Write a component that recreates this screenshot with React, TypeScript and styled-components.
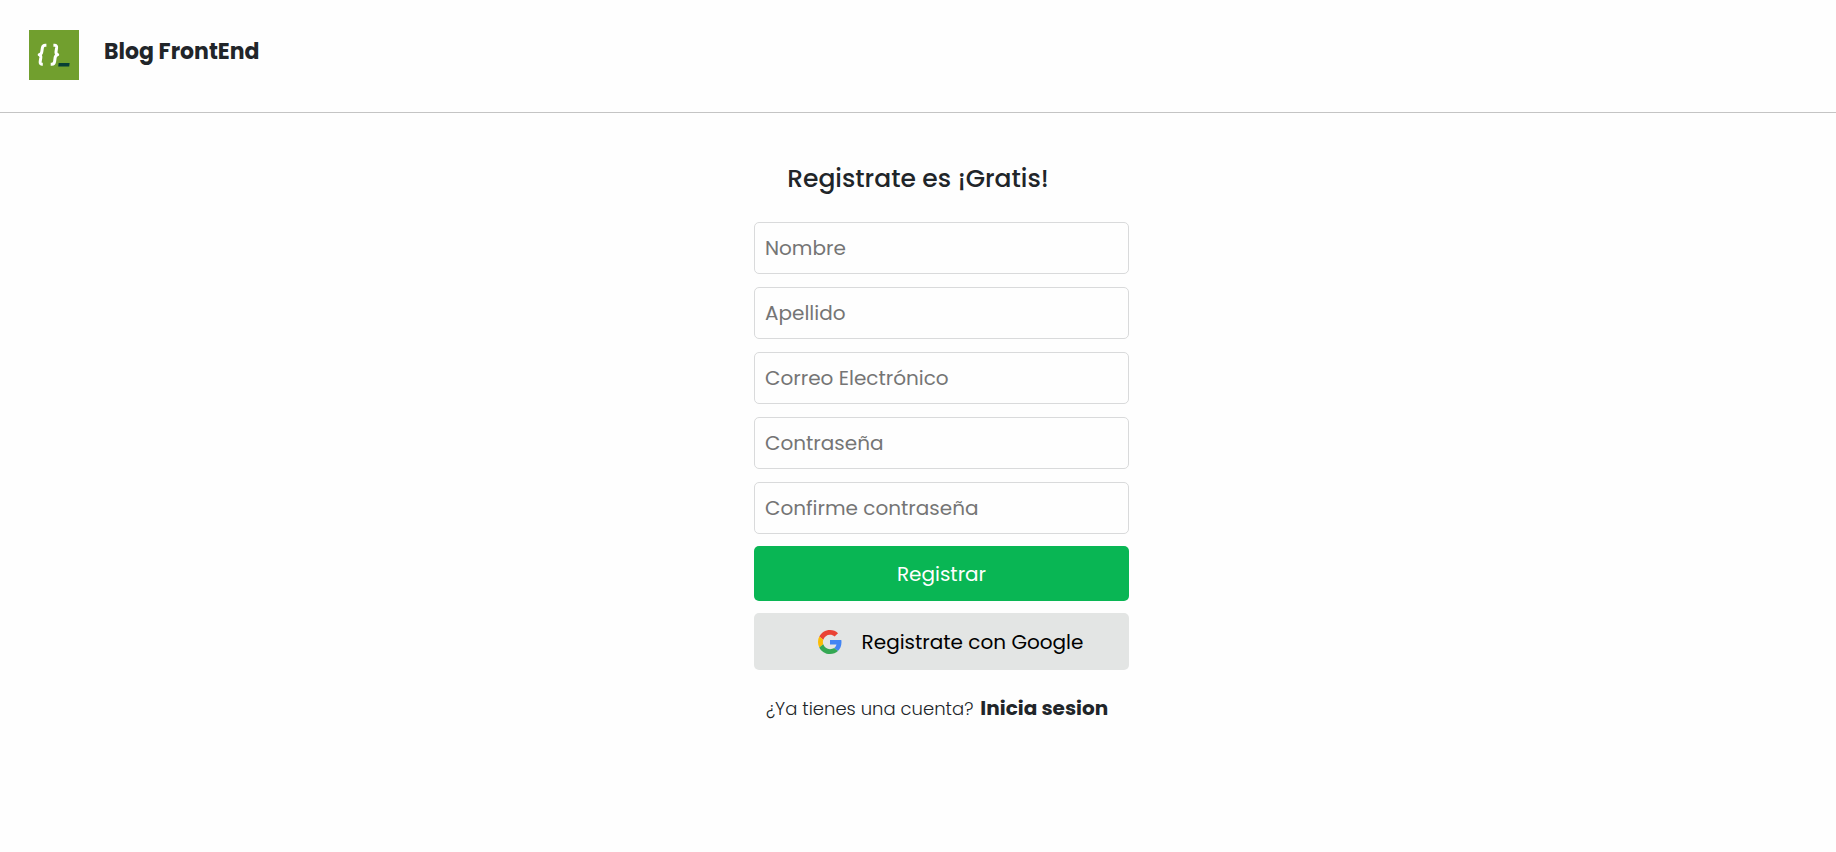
import React from "react";
import styled, { createGlobalStyle } from "styled-components";

const GlobalStyle = createGlobalStyle`
  *, *::before, *::after { box-sizing: border-box; }
  body {
    margin: 0;
    background: #fefefe;
    color: #212529;
    font-family: Poppins, Inter, "Open Sans", sans-serif;
  }
`;

const Header = styled.header`
  display: flex;
  align-items: flex-start;
  gap: 25px;
  padding: 30px 29px 32px;
  border-bottom: 1px solid #c4c4c4;
`;

const Logo = styled.svg`
  display: block;
  width: 50px;
  height: 50px;
`;

const Brand = styled.h1`
  margin: 0;
  padding-top: 4px;
  font-size: 22px;
  line-height: 36px;
  font-weight: 700;
`;

const Main = styled.main`
  width: 100%;
  max-width: 422px;
  margin: 0 auto;
  padding: 48px 0;
`;

const Title = styled.h2`
  margin: 0 0 25px;
  font-size: 25px;
  line-height: 36px;
  font-weight: 500;
  text-align: center;
`;

const Form = styled.form`
  display: flex;
  flex-direction: column;
  gap: 12px;
  margin-left: 47px;
`;

const Fields = styled.div`
  display: flex;
  flex-direction: column;
  gap: 13px;
`;

const Field = styled.input`
  width: 100%;
  height: 52px;
  padding: 0 10px;
  border: 1px solid #d9dadb;
  border-radius: 5px;
  background: #fefefe;
  color: #212529;
  font-family: inherit;
  font-size: 20px;
  &::placeholder { color: #757575; opacity: 1; }
`;

const Button = styled.button<{ $kind: "primary" | "google" }>`
  display: flex;
  align-items: center;
  justify-content: center;
  gap: 20px;
  height: ${(p) => (p.$kind === "google" ? 57 : 55)}px;
  padding: 0 0 0 ${(p) => (p.$kind === "google" ? 18 : 0)}px;
  border: 0;
  border-radius: 5px;
  background: ${(p) => (p.$kind === "google" ? "#e3e5e4" : "#09b654")};
  color: ${(p) => (p.$kind === "google" ? "#000" : "#fff")};
  font-family: inherit;
  font-size: 20px;
  cursor: pointer;
`;

const GoogleIcon = styled.svg`
  width: 24px;
  height: 24px;
`;

const SignIn = styled.p`
  display: flex;
  align-items: baseline;
  gap: 7px;
  margin: 10px 0 0;
  padding-left: 12px;
  font-size: 18px;
  line-height: 32px;
  font-weight: 300;
  white-space: nowrap;
`;

const SignInLink = styled.a`
  color: inherit;
  font-size: 20px;
  font-weight: 700;
  text-decoration: none;
`;

const fields = [
  { name: "nombre", label: "Nombre", type: "text" },
  { name: "apellido", label: "Apellido", type: "text" },
  { name: "correo", label: "Correo Electrónico", type: "email" },
  { name: "clave", label: "Contraseña", type: "password" },
  { name: "confirmacion", label: "Confirme contraseña", type: "password" },
];

export default function App() {
  return (
    <>
      <GlobalStyle />
      <Header>
        <Logo viewBox="0 0 50 50" aria-hidden="true">
          <path fill="#719f2e" d="M0 0h50v50H0z" />
          <g fill="none" stroke="#fff" strokeWidth="3" strokeLinejoin="round">
            <path d="M17.4 15.3h-1.2q-2.3 0-2.8 2.4l-.6 4q-.3 2.3-2.6 3 1.9.8 1.6 3.1l-.6 3.7q-.3 2.7 1.6 2.7h1" />
            <path d="M24.4 15.3h1.2q2.3 0 2 2.4l-.6 4q-.3 2.3 1.7 3-2.3.8-2.6 3.1l-.5 3.7q-.4 2.7-2.7 2.7h-1.2" />
          </g>
          <path fill="#073f35" d="M29.6 33h11l-.4 3.4H29.2z" />
        </Logo>
        <Brand>Blog FrontEnd</Brand>
      </Header>
      <Main>
        <Title>Registrate es ¡Gratis!</Title>
        <Form onSubmit={(e) => e.preventDefault()}>
          <Fields>
            {fields.map((f) => (
              <Field key={f.name} name={f.name} type={f.type} placeholder={f.label} aria-label={f.label} />
            ))}
          </Fields>
          <Button type="submit" $kind="primary">Registrar</Button>
          <Button type="button" $kind="google">
            <GoogleIcon viewBox="0 0 48 48" aria-hidden="true">
              <path fill="#ea4335" d="M24 9.5c3.54 0 6.71 1.22 9.21 3.6l6.85-6.85C35.9 2.38 30.47 0 24 0 14.62 0 6.51 5.38 2.56 13.22l7.98 6.19C12.43 13.72 17.74 9.5 24 9.5z" />
              <path fill="#4285f4" d="M46.98 24.55c0-1.57-.15-3.09-.38-4.55H24v9.02h12.94c-.58 2.96-2.26 5.48-4.78 7.18l7.73 6c4.51-4.18 7.09-10.36 7.09-17.65z" />
              <path fill="#fbbc05" d="M10.53 28.59c-.48-1.45-.76-2.99-.76-4.59s.27-3.14.76-4.59l-7.98-6.19C.92 16.46 0 20.12 0 24c0 3.88.92 7.54 2.56 10.78l7.97-6.19z" />
              <path fill="#34a853" d="M24 48c6.48 0 11.93-2.13 15.89-5.81l-7.73-6c-2.15 1.45-4.92 2.3-8.16 2.3-6.26 0-11.57-4.22-13.47-9.91l-7.98 6.19C6.51 42.62 14.62 48 24 48z" />
            </GoogleIcon>
            Registrate con Google
          </Button>
          <SignIn>
            ¿Ya tienes una cuenta?
            <SignInLink href="#inicia-sesion">Inicia sesion</SignInLink>
          </SignIn>
        </Form>
      </Main>
    </>
  );
}
